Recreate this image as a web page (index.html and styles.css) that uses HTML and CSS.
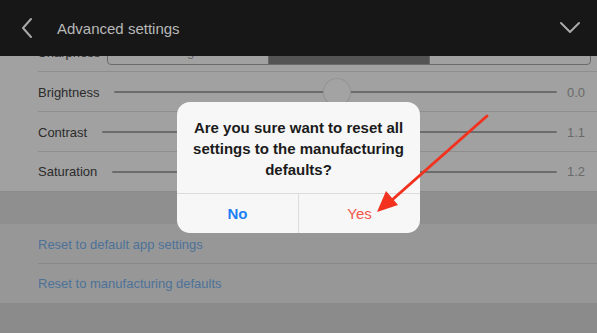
FILE: index.html
```html
<!DOCTYPE html>
<html>
<head>
<meta charset="utf-8">
<link rel="stylesheet" href="styles.css">
</head>
<body>
<div class="screen">
  <header class="topbar">
    <svg class="icon-back" width="14" height="22" viewBox="0 0 14 22"><path d="M11 2 L3 11 L11 20" fill="none" stroke="#a9a9a9" stroke-width="2" stroke-linecap="round" stroke-linejoin="round"/></svg>
    <span class="title">Advanced settings</span>
    <svg class="icon-down" width="22" height="14" viewBox="0 0 22 14"><path d="M2 2 L11 11 L20 2" fill="none" stroke="#a9a9a9" stroke-width="2" stroke-linecap="round" stroke-linejoin="round"/></svg>
  </header>
  <main class="content">
    <section class="group settings">
      <div class="row">
        <span class="label">Sharpness</span>
        <div class="segmented">
          <span class="seg">High</span>
          <span class="seg active">Medium</span>
          <span class="seg">Low</span>
        </div>
      </div>
      <div class="row">
        <span class="label">Brightness</span>
        <div class="slider"><div class="track"></div><div class="thumb" style="left: 50.2%"></div></div>
        <span class="value">0.0</span>
      </div>
      <div class="row">
        <span class="label">Contrast</span>
        <div class="slider"><div class="track"></div></div>
        <span class="value">1.1</span>
      </div>
      <div class="row last">
        <span class="label">Saturation</span>
        <div class="slider"><div class="track"></div></div>
        <span class="value">1.2</span>
      </div>
    </section>
    <div class="gap"></div>
    <section class="group links">
      <div class="row link">Reset to default app settings</div>
      <div class="row link last">Reset to manufacturing defaults</div>
    </section>
  </main>

  <div class="alert">
    <p class="alert-msg">Are you sure want to reset all settings to the manufacturing defaults?</p>
    <div class="alert-actions">
      <span class="btn btn-no">No</span>
      <span class="btn btn-yes">Yes</span>
    </div>
  </div>

  <svg class="arrow" width="597" height="333" viewBox="0 0 597 333">
    <line x1="487" y1="116" x2="392" y2="200" stroke="#f2321f" stroke-width="3" stroke-linecap="round"/>
    <polygon points="377,212 386,191 398,205" fill="#f2321f"/>
  </svg>
</div>
</body>
</html>
```

FILE: styles.css
```css
* { box-sizing: border-box; }
html, body {
  margin: 0;
  padding: 0;
}
body {
  font-family: "Liberation Sans", Arial, sans-serif;
  background: #8b8b8b;
  width: 597px;
  height: 333px;
  overflow: hidden;
}
.screen {
  position: relative;
  width: 597px;
  height: 333px;
  overflow: hidden;
  background: #8b8b8b;
}
.topbar {
  position: relative;
  z-index: 2;
  height: 56px;
  background: #171717;
  display: flex;
  align-items: center;
  padding: 0 16px 0 20px;
}
.icon-back { margin-right: 23px; }
.title {
  color: #b8b8b8;
  font-size: 15px;
  flex: 1;
}

.content {
  height: 277px;
  overflow: hidden;
}
.group {
  background: #a1a1a1;
  border-bottom: 1px solid #8a8a8a;
}
.settings { margin-top: -24px; }
.row {
  position: relative;
  height: 40px;
  display: flex;
  align-items: center;
  padding: 0 12px 0 38px;
  font-size: 13px;
  color: #2b2b2b;
}
.row::after {
  content: "";
  position: absolute;
  left: 38px;
  right: 0;
  bottom: 0;
  height: 1px;
  background: #8e8e8e;
}
.row.last::after { display: none; }
.row.last { height: 39px; }

.segmented {
  margin-left: 7px;
  margin-right: -6px;
  flex: 1;
  display: flex;
  height: 28px;
  margin-top: -2px;
  border: 1px solid #6a6a6a;
  border-radius: 4px;
  overflow: hidden;
}
.seg {
  flex: 1;
  display: flex;
  align-items: center;
  justify-content: center;
  color: #666;
  font-size: 13px;
}
.seg + .seg { border-left: 1px solid #6a6a6a; }
.seg.active { background: #545454; color: #a0a0a0; }

.slider {
  position: relative;
  flex: 1;
  height: 26px;
  margin: 0 8px 0 15px;
  display: flex;
  align-items: center;
}
.track {
  width: 100%;
  height: 2px;
  background: #6c6c6c;
  border-radius: 1px;
}
.thumb {
  position: absolute;
  top: 0;
  width: 26px;
  height: 26px;
  margin-left: -13px;
  border-radius: 50%;
  background: #a3a3a3;
  box-shadow: 0 0 0 1px #959595, 0 1px 2px rgba(0,0,0,0.15);
}
.value {
  color: #6a6a6a;
  font-size: 13px;
  width: 20px;
  text-align: right;
}
.gap { height: 32px; background: #8f8f8f; }
.links { background: #979797; }
.link { color: #4d7299; }
.links .row::after { background: #888; }

.alert {
  position: absolute;
  z-index: 3;
  left: 177px;
  top: 102px;
  width: 243px;
  height: 131px;
  background: #f7f7f7;
  border-radius: 13px;
  display: flex;
  flex-direction: column;
}
.alert-msg {
  margin: 0;
  flex: 1;
  padding: 15px 10px 0;
  text-align: center;
  font-size: 15px;
  font-weight: bold;
  line-height: 21px;
  color: #1b1b1b;
}
.alert-actions {
  height: 40px;
  display: flex;
  border-top: 1px solid #dcdcdc;
}
.btn {
  flex: 1;
  display: flex;
  align-items: center;
  justify-content: center;
  font-size: 15px;
}
.btn-no { color: #1c7ff6; font-weight: bold; border-right: 1px solid #dcdcdc; }
.btn-yes { color: #f3564a; }

.arrow {
  position: absolute;
  z-index: 4;
  left: 0;
  top: 0;
  pointer-events: none;
}
```
